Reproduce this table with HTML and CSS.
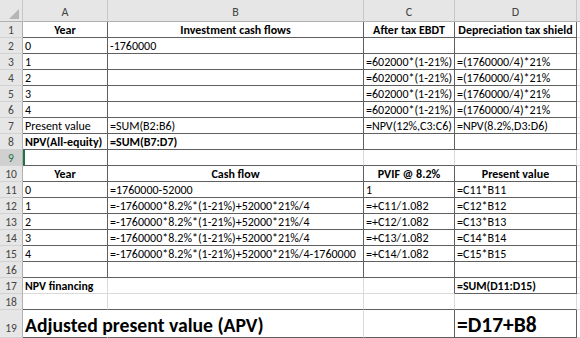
FILE: index.html
```html
<!DOCTYPE html>
<html>
<head>
<meta charset="utf-8">
<link rel="stylesheet" href="styles.css">
</head>
<body>
<div class="sheet">
  <div class="corner"><span class="tri"></span></div>
  <div class="colhead">A</div>
  <div class="colhead">B</div>
  <div class="colhead">C</div>
  <div class="colhead">D</div>
  <div class="colhead last"></div>

  <div class="rn">1</div>
  <div class="c b hd">Year</div>
  <div class="c b hd">Investment cash flows</div>
  <div class="c b hd">After tax EBDT</div>
  <div class="c b hd">Depreciation tax shield</div>
  <div class="c e"></div>

  <div class="rn">2</div>
  <div class="c b">0</div>
  <div class="c b">-1760000</div>
  <div class="c b"></div>
  <div class="c b"></div>
  <div class="c e"></div>

  <div class="rn">3</div>
  <div class="c b">1</div>
  <div class="c b"></div>
  <div class="c b">=602000*(1-21%)</div>
  <div class="c b">=(1760000/4)*21%</div>
  <div class="c e"></div>

  <div class="rn">4</div>
  <div class="c b">2</div>
  <div class="c b"></div>
  <div class="c b">=602000*(1-21%)</div>
  <div class="c b">=(1760000/4)*21%</div>
  <div class="c e"></div>

  <div class="rn">5</div>
  <div class="c b">3</div>
  <div class="c b"></div>
  <div class="c b">=602000*(1-21%)</div>
  <div class="c b">=(1760000/4)*21%</div>
  <div class="c e"></div>

  <div class="rn">6</div>
  <div class="c b">4</div>
  <div class="c b"></div>
  <div class="c b">=602000*(1-21%)</div>
  <div class="c b">=(1760000/4)*21%</div>
  <div class="c e"></div>

  <div class="rn">7</div>
  <div class="c b">Present value</div>
  <div class="c b">=SUM(B2:B6)</div>
  <div class="c b">=NPV(12%,C3:C6)</div>
  <div class="c b">=NPV(8.2%,D3:D6)</div>
  <div class="c e"></div>

  <div class="rn">8</div>
  <div class="c b bold">NPV(All-equity)</div>
  <div class="c b bold">=SUM(B7:D7)</div>
  <div class="c b"></div>
  <div class="c b"></div>
  <div class="c e"></div>

  <div class="rn sel">9</div>
  <div class="c b active"></div>
  <div class="c bb"></div>
  <div class="c bb"></div>
  <div class="c bb"></div>
  <div class="c e"></div>

  <div class="rn">10</div>
  <div class="c b hd">Year</div>
  <div class="c b hd">Cash flow</div>
  <div class="c b hd">PVIF @ 8.2%</div>
  <div class="c b hd">Present value</div>
  <div class="c e"></div>

  <div class="rn">11</div>
  <div class="c b">0</div>
  <div class="c b">=1760000-52000</div>
  <div class="c b">1</div>
  <div class="c b">=C11*B11</div>
  <div class="c e"></div>

  <div class="rn">12</div>
  <div class="c b">1</div>
  <div class="c b">=-1760000*8.2%*(1-21%)+52000*21%/4</div>
  <div class="c b">=+C11/1.082</div>
  <div class="c b">=C12*B12</div>
  <div class="c e"></div>

  <div class="rn">13</div>
  <div class="c b">2</div>
  <div class="c b">=-1760000*8.2%*(1-21%)+52000*21%/4</div>
  <div class="c b">=+C12/1.082</div>
  <div class="c b">=C13*B13</div>
  <div class="c e"></div>

  <div class="rn">14</div>
  <div class="c b">3</div>
  <div class="c b">=-1760000*8.2%*(1-21%)+52000*21%/4</div>
  <div class="c b">=+C13/1.082</div>
  <div class="c b">=C14*B14</div>
  <div class="c e"></div>

  <div class="rn">15</div>
  <div class="c b">4</div>
  <div class="c b">=-1760000*8.2%*(1-21%)+52000*21%/4-1760000</div>
  <div class="c b">=+C14/1.082</div>
  <div class="c b">=C15*B15</div>
  <div class="c e"></div>

  <div class="rn">16</div>
  <div class="c b"></div>
  <div class="c b"></div>
  <div class="c b"></div>
  <div class="c b"></div>
  <div class="c e"></div>

  <div class="rn">17</div>
  <div class="c small">NPV financing</div>
  <div class="c"></div>
  <div class="c br"></div>
  <div class="c b small">=SUM(D11:D15)</div>
  <div class="c e"></div>

  <div class="rn">18</div>
  <div class="c bb"></div>
  <div class="c bb"></div>
  <div class="c bb"></div>
  <div class="c bb"></div>
  <div class="c e"></div>

  <div class="rn big-rn">19</div>
  <div class="c bb big over">Adjusted present value (APV)</div>
  <div class="c bb"></div>
  <div class="c b"></div>
  <div class="c b big big-d">=D17+B8</div>
  <div class="c e"></div>
</div>
</body>
</html>
```

FILE: styles.css
```css
html, body {
  margin: 0;
  padding: 0;
  background: #ffffff;
}

.sheet {
  width: 580px;
  height: 338px;
  overflow: hidden;
  display: grid;
  grid-template-columns: 23px 85px 256px 91px 122px 3px;
  grid-template-rows: 22px repeat(18, 16px) 28px;
  font-family: "Carlito", "Lato", "Liberation Sans", sans-serif;
  font-size: 12px;
  color: #000000;
}

.corner {
  background: #e6e6e6;
  border-right: 1px solid #c8c8c8;
  border-bottom: 1px solid #b0b0b0;
  position: relative;
}

.tri {
  position: absolute;
  right: 3px;
  bottom: 2px;
  width: 0;
  height: 0;
  border-left: 10px solid transparent;
  border-bottom: 10px solid #b5b5b5;
}

.colhead {
  background: #e6e6e6;
  border-right: 1px solid #c8c8c8;
  border-bottom: 1px solid #b0b0b0;
  color: #444444;
  font-size: 12px;
  display: flex;
  align-items: flex-end;
  justify-content: center;
  padding-bottom: 2px;
  box-sizing: border-box;
}

.colhead.last {
  border-right: none;
}

.rn {
  background: #e6e6e6;
  border-right: 1px solid #b0b0b0;
  border-bottom: 1px solid #d2d2d2;
  color: #444444;
  font-size: 11.5px;
  display: flex;
  align-items: flex-end;
  justify-content: center;
  box-sizing: border-box;
  line-height: 14px;
  padding-bottom: 0;
}

.rn.sel {
  background: #d0d0d0;
  color: #217346;
}

.big-rn {
  padding-bottom: 2px;
}

.c {
  box-sizing: border-box;
  border-right: 1px solid #dadada;
  border-bottom: 1px solid #dadada;
  display: flex;
  align-items: flex-end;
  padding: 0 2px 0 2px;
  white-space: nowrap;
  line-height: 14px;
  min-width: 0;
}

.c.b {
  border-right-color: #5f5f5f;
  border-bottom-color: #5f5f5f;
}

.c.bb {
  border-bottom-color: #5f5f5f;
}

.c.br {
  border-right-color: #5f5f5f;
}

.c.e {
  border-right: none;
}

.hd {
  font-weight: bold;
  justify-content: center;
}

.bold {
  font-weight: bold;
}

.small {
  font-weight: bold;
  font-size: 11.8px;
}

.big {
  font-weight: bold;
  font-size: 19.7px;
  line-height: 24px;
  padding-bottom: 0;
}

.big-d {
  font-size: 21.5px;
}

.over {
  overflow: visible;
  border-right-color: transparent;
  position: relative;
  z-index: 1;
}

.active {
  box-shadow: inset 2px 0 0 #217346;
}
```
